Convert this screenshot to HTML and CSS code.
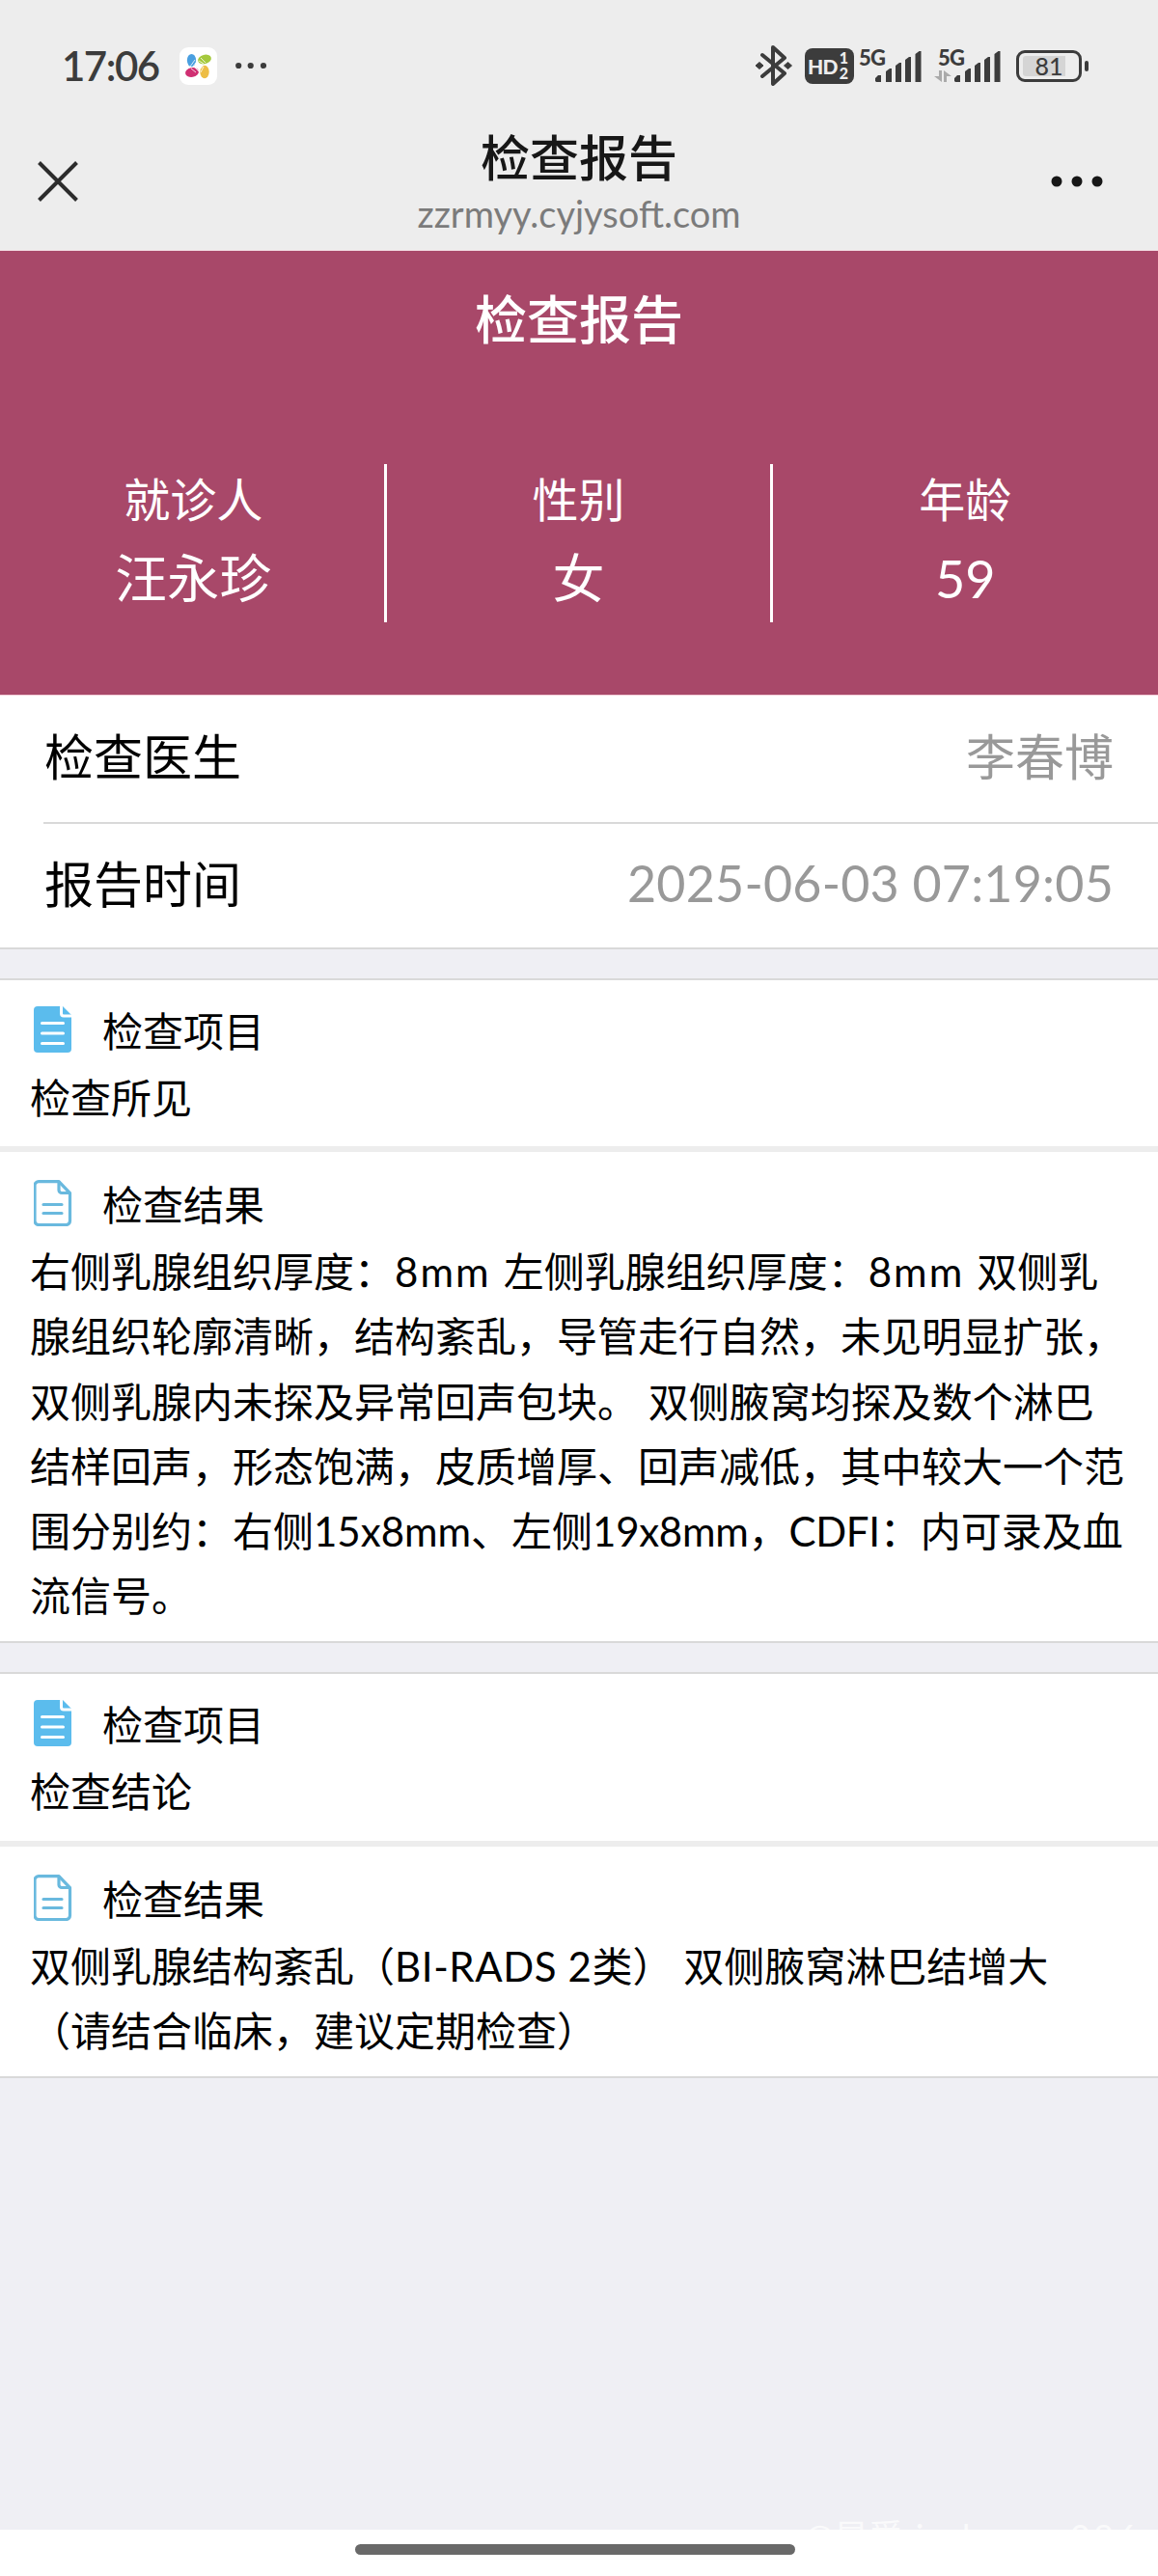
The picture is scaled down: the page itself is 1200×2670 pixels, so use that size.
FILE: index.html
```html
<!DOCTYPE html>
<html lang="zh-CN">
<head>
  <meta charset="UTF-8" />
  <meta name="viewport" content="width=device-width, initial-scale=1.0"/>
  <title>检查报告</title>
  <link rel="stylesheet" href="styles.css">
</head>
<body>

  <header class="topbar">
    <div class="status">
      <span class="time">17:06</span>
      <svg class="app-icon" width="39" height="39" viewBox="0 0 39 39">
        <rect width="39" height="39" rx="9" fill="#fff"/>
        <ellipse cx="12.5" cy="13.5" rx="4.6" ry="6.6" fill="#4a9fe0"/>
        <ellipse cx="26" cy="12.5" rx="7" ry="4.7" fill="#a5c93d" transform="rotate(-14 26 12.5)"/>
        <ellipse cx="13" cy="26" rx="7" ry="4.9" fill="#d02f72" transform="rotate(-10 13 26)"/>
        <ellipse cx="26" cy="25.5" rx="4.7" ry="6.7" fill="#edbd45"/>
        <path d="M11 20l5-7M14 20l3-4M22 11l5 5M20 14l5 3M12 22l5 4M15 20l5 5M22 26l3-6M22 22l2-3" stroke="#fff" stroke-width=".8"/>
      </svg>
      <svg class="status-dots" width="32" height="8" viewBox="0 0 32 8" fill="#3c3c3c">
        <circle cx="3.2" cy="4" r="3.1"/><circle cx="15.7" cy="4" r="3.1"/><circle cx="29" cy="4" r="3.1"/>
      </svg>

      <div class="status-right">
        <svg width="40" height="42" viewBox="0 0 40 42">
          <path d="M8 10L31 29 19 40V2L31 13 8 32" fill="none" stroke="#3c3c3c" stroke-width="4" stroke-linejoin="round" stroke-linecap="round"/>
          <path d="M5 17.5l4 3.5-4 3.5-4-3.5zM34.500 17.500l4 3.500-4 3.500-4-3.500z" fill="#3c3c3c" stroke="#3c3c3c" stroke-linejoin="round"/>
        </svg>
        <span class="hd">HD<span class="hd-num"><i>1</i><i>2</i></span></span>
        <svg class="signal" width="68" height="36" viewBox="0 0 68 36" fill="#3c3c3c">
          <text x="2" y="18" textLength="28">5G</text>
          <path d="M19 34v-3l3-3h3v7h-5zM30 24l4-3h2v14h-6zM40 18l4-3h2v20h-6zM50 12l4-3h2v26h-6zM60.500 6l4-3h2v32h-6z"/>
        </svg>
        <svg class="signal signal-2" width="68" height="36" viewBox="0 0 68 36" fill="#3c3c3c">
          <text x="2" y="18" textLength="28">5G</text>
          <path d="M19 34v-3l3-3h3v7h-5zM30 24l4-3h2v14h-6zM40 18l4-3h2v20h-6zM50 12l4-3h2v26h-6zM60.500 6l4-3h2v32h-6z"/>
          <path d="M3 23h3v12l-8-6h5zM8 35V23l8 6h-5v6z" fill="#aaa"/>
        </svg>
        <div class="battery"><div class="battery-fill"></div><span>81</span></div>
      </div>
    </div>

    <div class="navbar">
      <svg width="42" height="42" viewBox="0 0 42 42">
        <path d="M1.500 1.500l39 39M40.500 1.500l-39 39" stroke="#2c2c2c" stroke-width="4"/>
      </svg>
      <div class="nav-title">
        <h1>检查报告</h1>
        <p>zzrmyy.cyjysoft.com</p>
      </div>
      <svg class="more" width="54" height="12" viewBox="0 0 54 12" fill="#171717">
        <circle cx="6" cy="6" r="5.500"/><circle cx="27" cy="6" r="5.500"/><circle cx="48" cy="6" r="5.500"/>
      </svg>
    </div>
  </header>

  <section class="patient">
    <h2>检查报告</h2>
    <div class="patient-info">
      <div class="col"><span>就诊人</span><b>汪永珍</b></div>
      <div class="col"><span>性别</span><b>女</b></div>
      <div class="col"><span>年龄</span><b>59</b></div>
    </div>
  </section>

  <section class="cells">
    <div class="cell"><span>检查医生</span><em>李春博</em></div>
    <div class="cell"><span>报告时间</span><em class="date">2025-06-03 07:19:05</em></div>
  </section>

  <section class="report">
    <div class="item">
      <div class="item-title">
        <svg width="40" height="48" viewBox="0 0 40 48">
          <path d="M4 0h26l9 9v35a4 4 0 0 1-4 4H4a4 4 0 0 1-4-4V4a4 4 0 0 1 4-4z" fill="#5bbced"/>
          <path d="M28.500 1v6.500a2.500 2.500 0 0 0 2.500 2.500h7.500M8.500 17.500h22M8.500 28h22M8.500 38.500h22" fill="none" stroke="#fff" stroke-width="3" stroke-linecap="round"/>
        </svg>
        <span>检查项目</span>
      </div>
      <p>检查所见</p>
    </div>
    <div class="item">
      <div class="item-title">
        <svg width="40" height="48" viewBox="0 0 40 48" fill="none" stroke="#69b9de" stroke-width="3.200" stroke-linecap="round" stroke-linejoin="round">
          <path d="M5 1.600h21l11.500 12V42.500a4 4 0 0 1-4 4H5a4 4 0 0 1-4-4V5.600a4 4 0 0 1 4-4z"/>
          <path d="M26 2v8.500a3 3 0 0 0 3 3h8M10 25.500h19M10 34.500h19"/>
        </svg>
        <span>检查结果</span>
      </div>
      <p>右侧乳腺组织厚度：<i class="thick">8mm </i>左侧乳腺组织厚度：<i class="thick">8mm </i>双侧乳<br>腺组织轮廓清晰，结构紊乱，导管走行自然，未见明显扩张，<br>双侧乳腺内未探及异常回声包块。 双侧腋窝均探及数个淋巴<br>结样回声，形态饱满，皮质增厚、回声减低，其中较大一个范<br>围分别约：右侧15x8mm、左侧<i class="size">19x8mm</i>，<i class="size">CDFI</i>：内可录及血<br>流信号。</p>
    </div>
  </section>

  <section class="report">
    <div class="item">
      <div class="item-title">
        <svg width="40" height="48" viewBox="0 0 40 48">
          <path d="M4 0h26l9 9v35a4 4 0 0 1-4 4H4a4 4 0 0 1-4-4V4a4 4 0 0 1 4-4z" fill="#5bbced"/>
          <path d="M28.500 1v6.500a2.500 2.500 0 0 0 2.500 2.500h7.500M8.500 17.500h22M8.500 28h22M8.500 38.500h22" fill="none" stroke="#fff" stroke-width="3" stroke-linecap="round"/>
        </svg>
        <span>检查项目</span>
      </div>
      <p>检查结论</p>
    </div>
    <div class="item">
      <div class="item-title">
        <svg width="40" height="48" viewBox="0 0 40 48" fill="none" stroke="#69b9de" stroke-width="3.200" stroke-linecap="round" stroke-linejoin="round">
          <path d="M5 1.600h21l11.500 12V42.500a4 4 0 0 1-4 4H5a4 4 0 0 1-4-4V5.600a4 4 0 0 1 4-4z"/>
          <path d="M26 2v8.500a3 3 0 0 0 3 3h8M10 25.500h19M10 34.500h19"/>
        </svg>
        <span>检查结果</span>
      </div>
      <p>双侧乳腺结构紊乱（<i class="grade">BI-RADS 2</i>类） 双侧腋窝淋巴结增大<br>（请结合临床，建议定期检查）</p>
    </div>
  </section>

  <footer class="home-bar">
    <div class="handle"></div>
    <span class="watermark">@星爵<i> in house086</i></span>
  </footer>

</body>
</html>
```
FILE: styles.css
```css
* {
  box-sizing: border-box;
}
body {
  margin: 0;
  min-height: 2670px;
  display: flex;
  flex-direction: column;
  background: #efeff4;
  color: #000;
  font-family: Lato, "Noto Sans CJK SC", sans-serif;
  font-size: 42px;
}
h1, h2, p {
  margin: 0;
  font-weight: 400;
}
i, em, b {
  font-style: normal;
  font-weight: 400;
}
svg {
  display: block;
  flex: none;
}

/* Status bar and navigation */
.topbar {
  height: 260px;
  background: #ededed;
  border-bottom: 1px solid #f5e0e6;
}
.status {
  height: 136px;
  padding: 0 72px 0 64px;
  display: flex;
  align-items: center;
  color: #3c3c3c;
}
.time {
  width: 122px;
  font-size: 42px;
  font-weight: 600;
  letter-spacing: -1.5px;
}
.status-dots {
  margin-left: 19px;
}
.status-right {
  margin-left: auto;
  display: flex;
  align-items: center;
}
.hd {
  width: 51px;
  height: 37px;
  margin-left: 12px;
  padding-left: 3px;
  display: flex;
  align-items: center;
  border-radius: 8px;
  background: #3c3c3c;
  color: #ededed;
  font-size: 21px;
  font-weight: 900;
  letter-spacing: -0.8px;
}
.hd-num {
  width: 13px;
  margin-left: 2px;
  font-size: 16px;
  line-height: 16px;
}
.hd-num i {
  display: block;
  font-weight: 900;
}
.signal {
  margin-left: 3px;
  overflow: visible;
}
.signal text {
  font-size: 22px;
  font-weight: 900;
}
.signal-2 {
  margin-left: 14px;
}
.battery {
  position: relative;
  width: 68px;
  height: 33px;
  margin: 0 7px 0 15px;
  border: 3px solid #3c3c3c;
  border-radius: 9px;
  text-align: center;
  font-size: 25px;
  line-height: 27px;
  font-weight: 500;
}
.battery::after {
  content: "";
  position: absolute;
  right: -10px;
  top: 8px;
  width: 4px;
  height: 11px;
  border-radius: 2px;
  background: #3c3c3c;
}
.battery-fill {
  position: absolute;
  left: 4px;
  top: 3px;
  width: 44px;
  height: 21px;
  border-radius: 3px 0 0 3px;
  background: #d5d5d5;
}
.battery span {
  position: relative;
}
.navbar {
  padding: 0 57px 0 39px;
  display: grid;
  grid-template-columns: 72px 1fr 54px;
  grid-template-rows: 104px;
  align-items: center;
}
.nav-title {
  align-self: start;
  text-align: center;
}
.nav-title h1 {
  color: #171717;
  font-size: 51px;
  font-weight: 500;
  line-height: 55px;
}
.nav-title p {
  color: #7b7b7b;
  font-size: 38px;
  line-height: 60px;
}

/* Patient */
.patient {
  height: 461px;
  padding-top: 33px;
  background: #a84869;
  border-bottom: 1px solid #f3cfda;
  color: #fff;
  text-align: center;
}
.patient h2 {
  font-size: 54px;
  font-weight: 500;
  line-height: 78px;
}
.patient-info {
  margin-top: 110px;
  padding-left: 2px;
  display: grid;
  grid-template-columns: repeat(3, 1fr);
}
.col {
  height: 164px;
  display: flex;
  flex-direction: column;
  border-right: 3px solid #fff;
}
.col:last-child {
  border-right: 0;
}
.col span {
  font-size: 48px;
  line-height: 73px;
}
.col b {
  font-size: 54px;
  line-height: 91px;
}

/* Doctor and report time */
.cells {
  background: #fff;
  border-bottom: 2px solid #d9d9d9;
  font-size: 51px;
}
.cell {
  height: 131px;
  margin-left: 45px;
  padding: 0 46px 9px 1px;
  display: flex;
  align-items: center;
  justify-content: space-between;
}
.cell + .cell {
  height: 130px;
  border-top: 2px solid #d9d9d9;
}
.cell em {
  color: #999;
}
.cell .date {
  padding-top: 3px;
  font-size: 52px;
  letter-spacing: 0.2px;
}

/* Report */
.report {
  margin-top: 30px;
  background: #fff;
  border-top: 2px solid #d9d9d9;
  border-bottom: 2px solid #d9d9d9;
}
.item {
  padding: 18px 24px 16px 31px;
}
.item + .item {
  padding-top: 20px;
  padding-bottom: 13px;
  border-top: 6px solid #ededed;
}
.item-title {
  height: 71px;
  padding-left: 4px;
  display: flex;
  gap: 31px;
  line-height: 70px;
}
.item-title svg {
  margin-top: 9px;
}
.item p {
  line-height: 67.2px;
  white-space: nowrap;
}
.thick {
  letter-spacing: 2.1px;
}
.size {
  letter-spacing: -0.3px;
}
.grade {
  letter-spacing: 0.6px;
}

/* Bottom of the screen */
.home-bar {
  position: relative;
  height: 48px;
  margin-top: auto;
  padding-top: 15px;
  background: #fff;
}
.handle {
  width: 456px;
  height: 11px;
  margin-left: 368px;
  border-radius: 6px;
  background: #696969;
}
.watermark {
  position: absolute;
  left: 834px;
  top: -17px;
  color: rgba(255, 255, 255, 0.7);
  font-size: 36px;
  line-height: 48px;
  white-space: nowrap;
}
.watermark i {
  letter-spacing: 3.4px;
}
```
